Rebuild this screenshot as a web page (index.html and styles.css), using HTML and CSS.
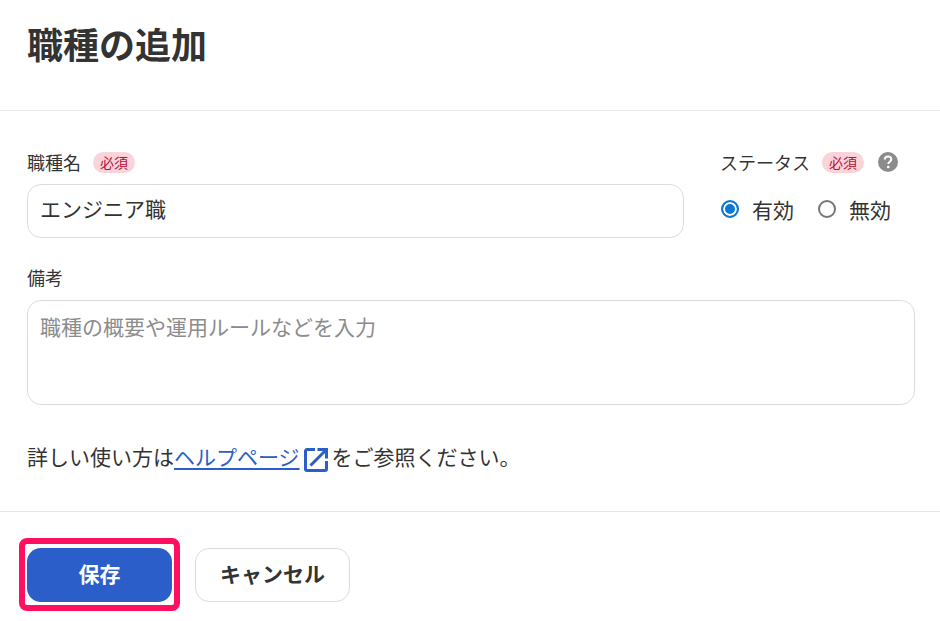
FILE: index.html
```html
<!DOCTYPE html>
<html lang="ja">
<head>
    <meta charset="UTF-8">
    <title>職種の追加</title>
    <link rel="stylesheet" href="styles.css">
</head>
<body>
    <header class="head">
        <h1>職種の追加</h1>
    </header>

    <main class="body">
        <div class="top-row">
            <div class="field name-field">
                <div class="label-row">
                    <label for="name">職種名</label>
                    <span class="required">必須</span>
                </div>
                <input class="text-input" id="name" type="text" value="エンジニア職">
            </div>
            <div class="field status-field">
                <div class="label-row">
                    <span class="label">ステータス</span>
                    <span class="required">必須</span>
                    <svg class="help" width="20" height="20" viewBox="0 0 20 20">
                        <circle cx="10" cy="10" r="10" fill="#8c8c8c"/>
                        <path d="M6.8 7.6c0-1.900 1.400-3.100 3.300-3.100s3.200 1.100 3.200 2.800c0 2.400-3 2.500-3 4.700" fill="none" stroke="#fff" stroke-width="2"/>
                        <circle cx="10.200" cy="15" r="1.300" fill="#fff"/>
                    </svg>
                </div>
                <div class="radios">
                    <label class="radio"><span class="dot dot-on"></span>有効</label>
                    <label class="radio"><span class="dot"></span>無効</label>
                </div>
            </div>
        </div>

        <div class="field note-field">
            <label for="note">備考</label>
            <textarea class="text-area" id="note" placeholder="職種の概要や運用ルールなどを入力"></textarea>
        </div>

        <p class="help-text">詳しい使い方は<a href="#">ヘルプページ</a><svg class="ext" width="24" height="24" viewBox="0 0 24 24" fill="none" stroke="#2b5ec9" stroke-width="3"><path d="M11 1.500H3a1.500 1.500 0 0 0-1.500 1.500v18a1.500 1.500 0 0 0 1.500 1.500h18a1.500 1.500 0 0 0 1.500-1.500V13"/><path d="M6.500 17.500 21 3M13.500 1.500h9v9"/></svg>をご参照ください。</p>
    </main>

    <footer class="foot">
        <div class="save-wrap">
            <button class="btn btn-save">保存</button>
            <span class="marker"></span>
        </div>
        <button class="btn btn-cancel">キャンセル</button>
    </footer>
</body>
</html>
```

FILE: styles.css
```css
* {
    box-sizing: border-box;
}
body {
    margin: 0;
    background: #fff;
    color: #333;
    font-family: "Noto Sans CJK JP", "Liberation Sans", sans-serif;
    font-size: 18px;
}
.head {
    height: 111px;
    padding: 16px 27px 0;
    border-bottom: 1px solid #e6e6e6;
}
.head h1 {
    margin: 0;
    font-size: 36px;
    line-height: 54px;
    font-weight: 700;
}
.body {
    height: 401px;
    padding: 40px 25px 0 27px;
    border-bottom: 1px solid #e6e6e6;
}
.top-row {
    display: flex;
    gap: 36px;
}
.name-field {
    width: 657px;
}
.label-row {
    display: flex;
    align-items: center;
    height: 24px;
    margin-bottom: 9px;
}
.field label, .label {
    font-size: 18px;
    line-height: 22px;
    margin-bottom: 2px;
}
.required {
    width: 42px;
    height: 21px;
    margin: 0 0 2px 12px;
    border-radius: 11px;
    background: #fbd3da;
    color: #b3123c;
    font-size: 14px;
    line-height: 21px;
    text-align: center;
}
.help {
    margin: 0 0 2px 14px;
}
.text-input, .text-area {
    display: block;
    width: 100%;
    border: 1px solid #dcdcdc;
    border-radius: 14px;
    padding: 0 12px;
    background: #fff;
    color: #333;
    font-family: inherit;
    font-size: 21px;
    outline: none;
}
.text-input {
    height: 54px;
    padding-bottom: 6px;
}
.text-area {
    height: 105px;
    margin-top: 11px;
    padding-top: 8px;
    line-height: 34px;
    resize: none;
}
.text-area::placeholder {
    color: #8c8c8c;
    opacity: 1;
}
.radios {
    display: flex;
    gap: 24px;
    height: 50px;
    padding-left: 1px;
    align-items: center;
}
.field .radio {
    display: flex;
    align-items: center;
    font-size: 21px;
    margin: 0;
}
.dot {
    width: 18px;
    height: 18px;
    margin-right: 13px;
    border: 2px solid #767676;
    border-radius: 50%;
}
.dot-on {
    border-color: #0b78d7;
    background: #0b78d7;
    box-shadow: inset 0 0 0 2px #fff;
}
.note-field {
    margin-top: 27px;
}
.note-field label {
    display: block;
    line-height: 24px;
}
.help-text {
    display: flex;
    align-items: center;
    margin: 35px 0 0;
    font-size: 21px;
    line-height: 32px;
}
.help-text a {
    color: #2b5ec9;
    text-decoration: underline;
    text-decoration-thickness: 2px;
    text-underline-offset: 3px;
}
.ext {
    margin: 8px 4px 0;
}
.foot {
    display: flex;
    gap: 23px;
    height: 109px;
    padding: 36px 27px 0;
}
.save-wrap {
    position: relative;
}
.btn {
    display: block;
    height: 54px;
    padding: 0 0 5px;
    border-radius: 14px;
    font-family: inherit;
    font-size: 21px;
    font-weight: 700;
}
.btn-save {
    width: 145px;
    border: none;
    background: #2b5ec9;
    color: #fff;
}
.btn-cancel {
    width: 155px;
    border: 1px solid #dcdcdc;
    background: #fff;
    color: #333;
}
.marker {
    position: absolute;
    left: -8px;
    top: -10px;
    width: 161px;
    height: 73px;
    border: 6px solid #ff0f5f;
    border-radius: 8px;
}
```
